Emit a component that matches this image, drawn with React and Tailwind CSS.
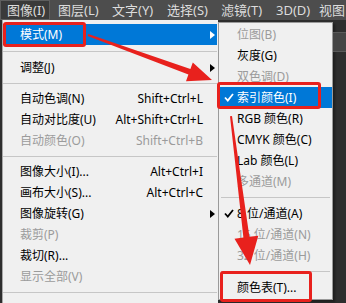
const bar = [
  { t: '图像(I)', w: 'w-[50px] pl-[6px] bg-[#3a3a3a] border border-[#5e5e5e]' },
  { t: '图层(L)', w: 'w-[54px] pl-[8px]' },
  { t: '文字(Y)', w: 'w-[55px] pl-[8px]' },
  { t: '选择(S)', w: 'w-[54px] pl-[8px]' },
  { t: '滤镜(T)', w: 'w-[55px] pl-[8px]' },
  { t: '3D(D)', w: 'w-[44px] pl-[8px]' },
  { t: '视图', w: 'pl-[7px]' },
];

const mainItems = [
  { label: '模式(M)', sub: true, active: true },
  { sep: 'h-[12px]' },
  { label: '调整(J)', sub: true },
  { sep: 'h-[10px]' },
  { label: '自动色调(N)', key: 'Shift+Ctrl+L' },
  { label: '自动对比度(U)', key: 'Alt+Shift+Ctrl+L' },
  { label: '自动颜色(O)', key: 'Shift+Ctrl+B', off: true },
  { sep: 'h-[10px]' },
  { label: '图像大小(I)...', key: 'Alt+Ctrl+I' },
  { label: '画布大小(S)...', key: 'Alt+Ctrl+C' },
  { label: '图像旋转(G)', sub: true },
  { label: '裁剪(P)', off: true },
  { label: '裁切(R)...' },
  { label: '显示全部(V)', off: true },
  { sep: 'h-[10px]' },
];

const modeItems = [
  { label: '位图(B)', off: true },
  { label: '灰度(G)' },
  { label: '双色调(D)', off: true },
  { label: '索引颜色(I)', active: true, check: true },
  { label: 'RGB 颜色(R)' },
  { label: 'CMYK 颜色(C)' },
  { label: 'Lab 颜色(L)' },
  { label: '多通道(M)', off: true },
  { sep: true },
  { label: '8 位/通道(A)', check: true },
  { label: '16 位/通道(N)', off: true },
  { label: '32 位/通道(H)', off: true },
  { sep: true },
  { label: '颜色表(T)...' },
];

function Arrow({ white }) {
  return (
    <svg width="5" height="8" viewBox="0 0 5 8">
      <path d="M0 0 L5 4 L0 8 Z" fill={white ? '#ffffff' : '#000000'} />
    </svg>
  );
}

function Check({ white }) {
  return (
    <svg width="10" height="9" viewBox="0 0 10 9">
      <path d="M1 4.5 L3.8 7.5 L9 1" fill="none" stroke={white ? '#ffffff' : '#000000'} strokeWidth="1.8" />
    </svg>
  );
}

export default function App() {
  return (
    <div
      className="relative w-[346px] h-[303px] overflow-hidden bg-[#2e2e2e] text-[12px] leading-none"
      style={{ fontFamily: '"Noto Sans", "Noto Sans CJK SC", sans-serif' }}
    >
      {/* menu bar */}
      <div className="flex h-[20px] bg-[#4d4d4d] text-[13px] text-[#dcdcdc] whitespace-nowrap">
        {bar.map((b) => (
          <div key={b.t} className={'flex items-center shrink-0 ' + b.w}>
            {b.t}
          </div>
        ))}
      </div>

      <div className="flex">
        {/* main menu */}
        <div className="w-[216px] ml-[2px] bg-[#f0f0f0] border-l border-[#a8a8a8] pt-[4px] pr-[1px] h-[290px]">
          {mainItems.map((it, i) =>
            it.sep ? (
              <div key={i} className={'flex items-center ' + it.sep}>
                <div className="h-px w-full bg-[#c6c6c6]" />
              </div>
            ) : (
              <div
                key={i}
                className={
                  'flex items-center h-[21px] pl-[17px] whitespace-nowrap ' +
                  (it.active ? 'bg-[#0078d7] text-white' : it.off ? 'text-[#9b9b9b]' : 'text-black')
                }
              >
                <span className="flex-1">{it.label}</span>
                {it.key && <span>{it.key}</span>}
                <span className="w-[14px] pl-[7px] flex items-center">
                  {it.sub && <Arrow white={it.active} />}
                </span>
              </div>
            )
          )}
        </div>

        {/* mode submenu */}
        <div className="w-[115px] h-[278px] mt-[2px] bg-[#f0f0f0] border border-[#9a9a9a] py-[1px] shadow-[2px_2px_2px_rgba(0,0,0,0.35)]">
          {modeItems.map((it, i) =>
            it.sep ? (
              <div key={i} className="flex items-center h-[11px] px-[2px]">
                <div className="h-px w-full bg-[#c6c6c6]" />
              </div>
            ) : (
              <div
                key={i}
                className={
                  'flex items-center h-[21px] whitespace-nowrap ' +
                  (it.active ? 'bg-[#0078d7] text-white' : it.off ? 'text-[#9b9b9b]' : 'text-black')
                }
              >
                <span className="w-[18px] pl-[5px] flex items-center">
                  {it.check && <Check white={it.active} />}
                </span>
                <span>{it.label}</span>
              </div>
            )
          )}
        </div>

        {/* panel area to the right */}
        <div className="flex-1 pt-[12px]">
          <div className="h-[20px] bg-[#454545] border-y border-[#5a5a5a]" />
        </div>
      </div>

      {/* annotations */}
      <div className="absolute left-[3px] top-[22px] w-[83px] h-[25px] border-[3px] border-[#e8211d] rounded-[3px]" />
      <div className="absolute left-[217px] top-[82px] w-[104px] h-[27px] border-[3px] border-[#e8211d] rounded-[3px]" />
      <div className="absolute left-[220px] top-[271px] w-[92px] h-[31px] border-[3px] border-[#e8211d] rounded-[3px]" />

      <svg className="absolute left-0 top-0 pointer-events-none" width="346" height="303" viewBox="0 0 346 303">
        <polygon
          points="88.3,34.1 190.4,69 192.8,62.4 212,80 186,81.2 188.4,74.6 87.7,35.9"
          fill="#e8211d"
        />
        <polygon
          points="232,116 249.4,236.8 258.3,235.7 250,265 234.5,238.7 243.4,237.6 230,116.2"
          fill="#e8211d"
        />
      </svg>
    </div>
  );
}
